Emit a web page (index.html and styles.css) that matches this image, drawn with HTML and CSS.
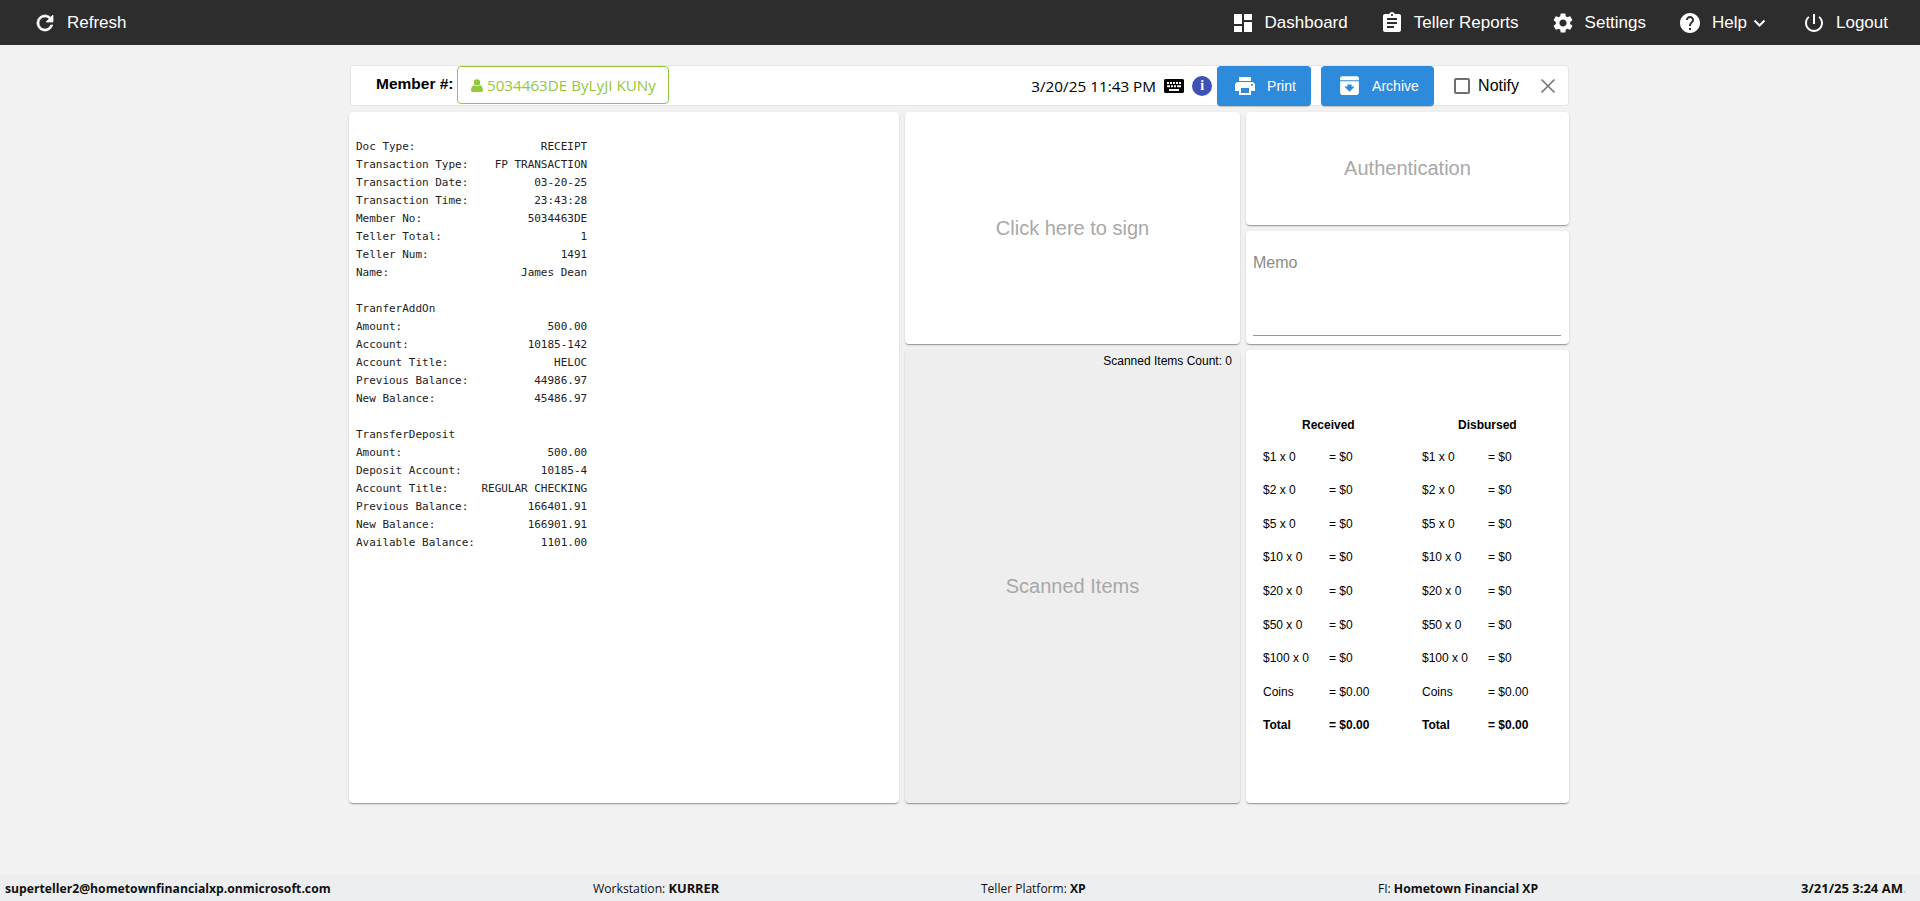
FILE: index.html
```html
<!DOCTYPE html>
<html lang="en">
<head>
<meta charset="utf-8">
<title>Teller</title>
<link rel="stylesheet" href="styles.css">
</head>
<body>
<header class="topbar">
  <a class="nav-item"><svg class="ico ico-bold" viewBox="0 0 24 24"><path d="M17.65 6.35C16.2 4.9 14.21 4 12 4c-4.42 0-7.99 3.58-7.99 8s3.57 8 7.99 8c3.73 0 6.84-2.55 7.73-6h-2.08c-.82 2.33-3.04 4-5.65 4-3.31 0-6-2.69-6-6s2.69-6 6-6c1.66 0 3.14.69 4.22 1.78L13 11h7V4l-2.35 2.35z"/></svg>Refresh</a>
  <nav class="nav-right">
    <a class="nav-item"><svg class="ico" viewBox="0 0 24 24"><path d="M3 13h8V3H3v10zm0 8h8v-6H3v6zm10 0h8V11h-8v10zm0-18v6h8V3h-8z"/></svg>Dashboard</a>
    <a class="nav-item"><svg class="ico" viewBox="0 0 24 24"><path d="M19 3h-4.18C14.4 1.84 13.3 1 12 1c-1.3 0-2.4.84-2.82 2H5c-1.1 0-2 .9-2 2v14c0 1.1.9 2 2 2h14c1.1 0 2-.9 2-2V5c0-1.1-.9-2-2-2zm-7 0c.55 0 1 .45 1 1s-.45 1-1 1-1-.45-1-1 .45-1 1-1zm2 14H7v-2h7v2zm3-4H7v-2h10v2zm0-4H7V7h10v2z"/></svg>Teller Reports</a>
    <a class="nav-item"><svg class="ico" viewBox="0 0 24 24"><path d="M19.14 12.94c.04-.3.06-.61.06-.94 0-.32-.02-.64-.07-.94l2.03-1.58c.18-.14.23-.41.12-.61l-1.92-3.32c-.12-.22-.37-.29-.59-.22l-2.39.96c-.5-.38-1.03-.7-1.62-.94l-.36-2.54c-.04-.24-.24-.41-.48-.41h-3.84c-.24 0-.43.17-.47.41l-.36 2.54c-.59.24-1.13.57-1.62.94l-2.39-.96c-.22-.08-.47 0-.59.22L2.74 8.87c-.12.21-.08.47.12.61l2.03 1.58c-.05.3-.09.63-.09.94s.02.64.07.94l-2.03 1.58c-.18.14-.23.41-.12.61l1.92 3.32c.12.22.37.29.59.22l2.39-.96c.5.38 1.03.7 1.62.94l.36 2.54c.05.24.24.41.48.41h3.84c.24 0 .44-.17.47-.41l.36-2.54c.59-.24 1.13-.56 1.62-.94l2.39.96c.22.08.47 0 .59-.22l1.92-3.32c.12-.22.07-.47-.12-.61l-2.01-1.58zM12 15.6c-1.98 0-3.6-1.62-3.6-3.6s1.62-3.6 3.6-3.6 3.6 1.62 3.6 3.6-1.62 3.6-3.6 3.6z"/></svg>Settings</a>
    <a class="nav-item"><svg class="ico" viewBox="0 0 24 24"><path d="M12 2C6.48 2 2 6.48 2 12s4.48 10 10 10 10-4.48 10-10S17.52 2 12 2zm1 17h-2v-2h2v2zm2.07-7.75l-.9.92C13.45 12.9 13 13.5 13 15h-2v-.5c0-1.1.45-2.1 1.17-2.83l1.24-1.26c.37-.36.59-.86.59-1.41 0-1.1-.9-2-2-2s-2 .9-2 2H8c0-2.21 1.79-4 4-4s4 1.79 4 4c0 .88-.36 1.68-.93 2.25z"/></svg>Help<svg class="chev" viewBox="0 0 12 8"><path d="M1 1.5l5 5 5-5" /></svg></a>
    <a class="nav-item"><svg class="ico" viewBox="0 0 24 24"><path d="M13 3h-2v10h2V3zm4.83 2.17l-1.42 1.42C17.99 7.86 19 9.81 19 12c0 3.87-3.13 7-7 7s-7-3.13-7-7c0-2.19 1.01-4.14 2.58-5.42L6.17 5.17C4.23 6.82 3 9.26 3 12c0 4.97 4.03 9 9 9s9-4.03 9-9c0-2.74-1.23-5.18-3.17-6.83z"/></svg>Logout</a>
  </nav>
</header>

<main class="page">
  <section class="toolbar">
    <span class="member-label">Member #:</span>
    <span class="member-chip"><svg class="user-ico" viewBox="0 0 12 13"><circle cx="6" cy="3.4" r="3.2"/><path d="M0 11.2C0 8.6 1.2 6.6 3 6.2c.8.7 1.9 1.1 3 1.1s2.200-.4 3-1.100c1.800.4 3 2.400 3 5 0 1.100-.8 1.800-1.800 1.800H1.800C.8 13 0 12.300 0 11.200z"/></svg>5034463DE ByLyJI KUNy</span>
    <span class="stamp">3/20/25 11:43 PM</span>
    <svg class="kbd-ico" viewBox="0 0 20 14"><path fill-rule="evenodd" d="M1.500 0h17c.8 0 1.500.7 1.500 1.500v11c0 .8-.7 1.500-1.500 1.500h-17C.7 14 0 13.300 0 12.500v-11C0 .7.700 0 1.500 0zM3 3v2h2V3H3zm3 0v2h2V3H6zm3 0v2h2V3H9zm3 0v2h2V3h-2zm3 0v2h2V3h-2zM3 6.200v2h3v-2H3zm4 0v2h2v-2H7zm3 0v2h2v-2h-2zm3 0v2h4v-2h-4zM5 10v2h10v-2H5z"/></svg>
    <span class="info-dot">i</span>
    <button class="btn btn-print"><svg class="btn-ico" viewBox="0 0 24 24"><path d="M19 8H5c-1.660 0-3 1.340-3 3v6h4v4h12v-4h4v-6c0-1.660-1.340-3-3-3zm-3 11H8v-5h8v5zm3-7c-.550 0-1-.450-1-1s.450-1 1-1 1 .450 1 1-.450 1-1 1zm-1-9H6v4h12V3z"/></svg>Print</button>
    <button class="btn btn-archive"><svg class="btn-ico arch-ico" viewBox="0 0 24 24"><path fill-rule="evenodd" d="M5 3h14a2 2 0 0 1 2 2v2H3V5a2 2 0 0 1 2-2zM3 8h18v11a2 2 0 0 1-2 2H5a2 2 0 0 1-2-2V8zm9 10l5-5h-3v-2h-4v2H7l5 5z"/></svg>Archive</button>
    <label class="notify"><span class="check"></span>Notify</label>
    <svg class="close-ico" viewBox="0 0 16 16"><path d="M1.500 1.500l13 13M14.500 1.500l-13 13"/></svg>
  </section>

  <section class="board">
    <article class="card receipt">
<pre class="receipt-text">Doc Type:                   RECEIPT
Transaction Type:    FP TRANSACTION
Transaction Date:          03-20-25
Transaction Time:          23:43:28
Member No:                5034463DE
Teller Total:                     1
Teller Num:                    1491
Name:                    James Dean

TranferAddOn
Amount:                      500.00
Account:                  10185-142
Account Title:                HELOC
Previous Balance:          44986.97
New Balance:               45486.97

TransferDeposit
Amount:                      500.00
Deposit Account:            10185-4
Account Title:     REGULAR CHECKING
Previous Balance:         166401.91
New Balance:              166901.91
Available Balance:          1101.00</pre>
    </article>

    <article class="card sign placeholder">Click here to sign</article>
    <article class="card auth placeholder">Authentication</article>

    <article class="card memo">
      <span class="memo-label">Memo</span>
      <span class="memo-line"></span>
    </article>

    <article class="card scanned placeholder">
      <span class="scan-count">Scanned Items Count: 0</span>
      Scanned Items
    </article>

    <article class="card bills">
      <div class="bills-grid">
        <b class="bills-head head-in">Received</b><b class="bills-head head-out">Disbursed</b>
        <span>$1 x 0</span><span>= $0</span><span>$1 x 0</span><span>= $0</span>
        <span>$2 x 0</span><span>= $0</span><span>$2 x 0</span><span>= $0</span>
        <span>$5 x 0</span><span>= $0</span><span>$5 x 0</span><span>= $0</span>
        <span>$10 x 0</span><span>= $0</span><span>$10 x 0</span><span>= $0</span>
        <span>$20 x 0</span><span>= $0</span><span>$20 x 0</span><span>= $0</span>
        <span>$50 x 0</span><span>= $0</span><span>$50 x 0</span><span>= $0</span>
        <span>$100 x 0</span><span>= $0</span><span>$100 x 0</span><span>= $0</span>
        <span>Coins</span><span>= $0.00</span><span>Coins</span><span>= $0.00</span>
        <b>Total</b><b>= $0.00</b><b>Total</b><b>= $0.00</b>
      </div>
    </article>
  </section>
</main>

<footer class="statusbar">
  <b class="st-user">superteller2@hometownfinancialxp.onmicrosoft.com</b>
  <span class="st-ws">Workstation: <b>KURRER</b></span>
  <span class="st-pf">Teller Platform: <b>XP</b></span>
  <span class="st-fi">FI: <b>Hometown Financial XP</b></span>
  <b class="st-time">3/21/25 3:24 AM<span class="st-dot">.</span></b>
</footer>
</body>
</html>
```
FILE: styles.css
```css
* { box-sizing: border-box; }
html, body { margin: 0; height: 100%; }
body {
  background: #f2f2f2;
  font-family: "Liberation Sans", Arial, sans-serif;
  color: #000;
  display: flex;
  flex-direction: column;
  min-height: 901px;
  overflow: hidden;
}

/* top bar */
.topbar {
  height: 45px;
  flex: none;
  background: #2d2d2d;
  color: #fff;
  display: flex;
  align-items: center;
  justify-content: space-between;
  padding: 0 32px 0 33px;
  font-size: 17px;
}
.nav-right { display: flex; gap: 32px; align-items: center; }
.nav-item { display: flex; align-items: center; gap: 10px; }
.ico { width: 24px; height: 24px; fill: #fff; flex: none; }
.ico-bold { stroke: #fff; stroke-width: .7; }
.chev { width: 13px; height: 8px; fill: none; stroke: #fff; stroke-width: 2; margin-left: -4px; margin-right: 4px; }

/* page */
.page { flex: 1; margin-left: 349px; width: 1220px; padding-top: 20px; }

.toolbar {
  height: 41px;
  margin-left: 1px;
  background: #fff;
  border: 1px solid #e6e6e6;
  border-top: 1px solid #e4e4e4;
  border-radius: 4px;
  display: flex;
  align-items: center;
  padding-left: 25px;
}
.member-label { font-weight: 700; font-size: 15.500px; width: 81px; flex: none; margin-top: -4px; }
.member-chip {
  display: flex;
  align-items: center;
  height: 38px;
  width: 212px;
  border: 1px solid #93c83d;
  border-radius: 4px;
  padding-left: 13px;
  color: #93c83d;
  font-family: "Open Sans", sans-serif;
  font-size: 15.200px;
  align-self: flex-start;
}
.user-ico { width: 12px; height: 13px; fill: #93c83d; margin-right: 4px; }
.stamp { margin-left: auto; font-family: "Open Sans", sans-serif; font-size: 15.300px; }
.kbd-ico { width: 20px; height: 14px; margin-left: 8px; fill: #000; }
.info-dot {
  width: 20px; height: 20px;
  margin-left: 8px;
  border-radius: 50%;
  background: #3f51b5;
  color: #fff;
  font: 700 14px/20px "Liberation Serif", serif;
  text-align: center;
}
.btn {
  height: 40px;
  border: 0;
  border-radius: 4px;
  background: #2e8bdb;
  color: #fff;
  display: flex;
  align-items: center;
  font: 14px "Liberation Sans", Arial, sans-serif;
  padding: 0;
  box-shadow: 0 1px 1px rgba(0,0,0,.2);
}
.btn-ico { fill: #fff; flex: none; width: 24px; height: 24px; }
.btn-print { width: 94px; margin-left: 5px; padding-left: 16px; gap: 10px; }
.btn-archive { width: 113px; margin-left: 10px; padding-left: 16px; gap: 10px; }
.arch-ico { width: 25px; height: 25px; }
.notify { display: flex; align-items: center; gap: 8px; margin-left: 20px; font-size: 16px; }
.check { width: 16px; height: 16px; border: 2px solid #6f6f6f; border-radius: 2px; }
.close-ico { width: 16px; height: 16px; margin-left: 21px; margin-right: 12px; fill: none; stroke: #757575; stroke-width: 1.600; }

/* cards */
.board {
  margin-top: 6px;
  display: grid;
  grid-template-columns: 550px 335px 323px;
  grid-template-rows: 113px 113px 453px;
  gap: 6px;
}
.card {
  background: #fff;
  border-radius: 4px;
  box-shadow: 0 2px 1px -1px rgba(0,0,0,.2), 0 1px 1px 0 rgba(0,0,0,.14), 0 1px 3px 0 rgba(0,0,0,.12);
  position: relative;
}
.placeholder {
  display: flex;
  align-items: center;
  justify-content: center;
  font-size: 20px;
  color: #a8a8a8;
}
.receipt { grid-column: 1; grid-row: 1 / 4; padding: 26px 7px; }
.receipt-text { margin: 0; font: 11px/18px "DejaVu Sans Mono", monospace; letter-spacing: -.02px; color: #222; }
.sign { grid-column: 2; grid-row: 1 / 3; }
.auth { grid-column: 3; grid-row: 1; }
.memo { grid-column: 3; grid-row: 2; padding: 22px 7px 0; }
.memo-label { display: block; font-size: 16px; line-height: 20px; color: #8a8a8a; }
.memo-line { position: absolute; left: 7px; right: 8px; bottom: 8px; border-bottom: 1px solid #999; }
.scanned { grid-column: 2; grid-row: 3; background: #eee; padding-top: 20px; }
.scan-count { position: absolute; top: 4px; right: 8px; font-size: 12px; line-height: 14px; color: #000; }
.bills { grid-column: 3; grid-row: 3; padding: 61px 0 0 17px; font-size: 12px; }
.bills-grid {
  display: grid;
  grid-template-columns: 66px 93px 66px 60px;
  grid-template-rows: 28.800px;
  grid-auto-rows: 33.600px;
  align-items: center;
}
.bills-head { grid-column: span 2; line-height: 14px; }
.head-in { padding-left: 39px; }
.head-out { padding-left: 36px; }

/* status bar */
.statusbar {
  flex: none;
  height: 26px;
  background: #eceef0;
  display: flex;
  align-items: center;
  padding-left: 5px;
  font-family: "Open Sans", sans-serif;
  font-size: 12px;
  color: #111;
  white-space: nowrap;
}
.statusbar b { font-size: 12.200px; }
.st-user { width: 588px; }
.st-ws { width: 388px; font-size: 12.200px; }
.statusbar .st-ws b { font-size: 12.800px; }
.st-pf { width: 397px; }
.st-fi { width: 423px; }
.statusbar .st-time { font-size: 13px; }
.st-dot { color: #b5b5b5; font-weight: 400; }
```
